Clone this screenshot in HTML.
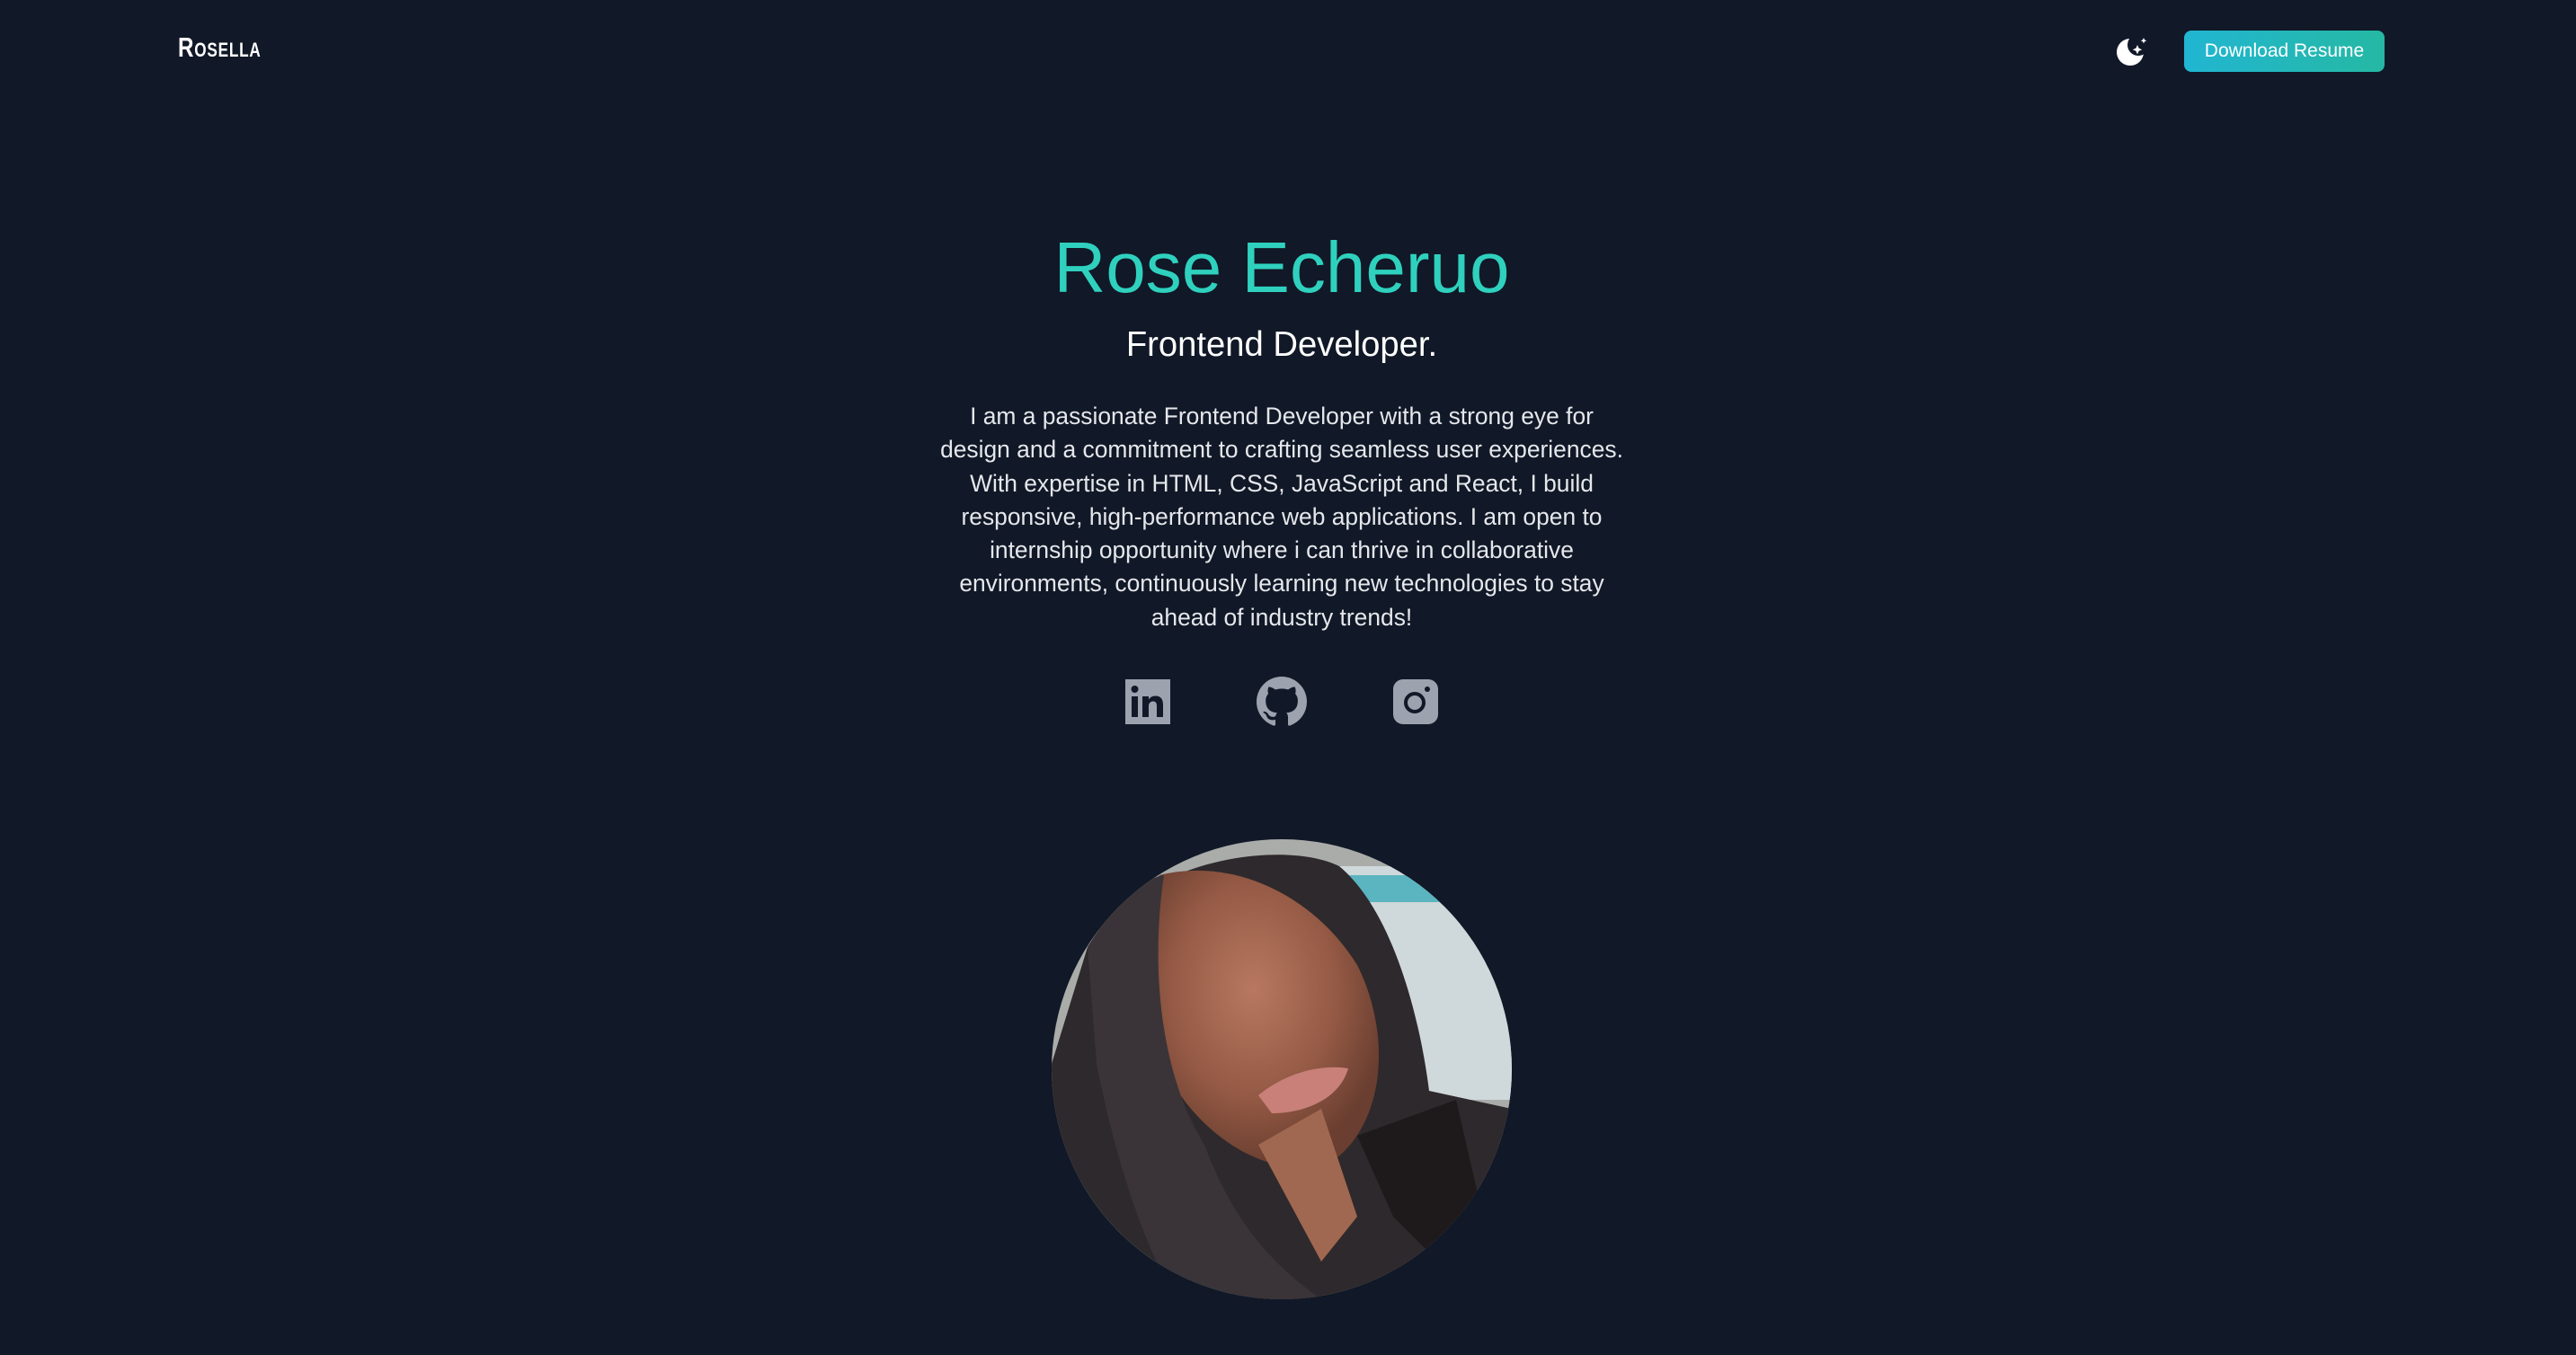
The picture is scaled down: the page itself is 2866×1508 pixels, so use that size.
<!DOCTYPE html>
<html><head><meta charset="utf-8">
<style>
html,body{margin:0;padding:0}
body{width:2866px;height:1508px;background:#111827;position:relative;overflow:hidden;font-family:"Liberation Sans",Arial,sans-serif}
.abs{position:absolute}
.logo{left:198px;top:37px;color:#fff;font-size:31px;font-variant:small-caps;letter-spacing:1px;transform:scaleX(0.78);transform-origin:left top;line-height:1;font-weight:bold}
.btn{left:2430px;top:34px;width:223px;height:46px;border-radius:8px;background:linear-gradient(90deg,#21b6d2,#25b8a3);color:#fff;font-size:21px;line-height:46px;text-align:center}
.name{left:0;width:2852px;top:258px;text-align:center;font-size:80px;line-height:80px;color:#2fd1be}
.sub{left:0;width:2852px;top:364px;text-align:center;font-size:39px;line-height:39px;color:#fff;transform:scaleX(0.98)}
.para{left:0;width:2852px;top:445px;text-align:center;font-size:26.4px;line-height:37.3px;color:#e5e7eb}
</style></head><body>
<div class="abs logo">Rosella</div>
<svg class="abs" style="left:2352px;top:38px" width="40" height="40" viewBox="0 0 40 40">
<defs><mask id="m"><rect width="40" height="40" fill="#fff"/><circle cx="27" cy="12" r="12" fill="#000"/></mask></defs>
<circle cx="18" cy="20" r="15" fill="#fff" mask="url(#m)"/>
<path d="M26 12 l1.6 3.6 3.6 1.6 -3.6 1.6 -1.6 3.6 -1.6 -3.6 -3.6 -1.6 3.6 -1.6z" fill="#fff"/>
<path d="M33 4 l1 2.2 2.2 1 -2.2 1 -1 2.2 -1 -2.2 -2.2 -1 2.2 -1z" fill="#fff"/>
</svg>
<div class="abs btn">Download Resume</div>
<div class="abs name">Rose Echeruo</div>
<div class="abs sub">Frontend Developer.</div>
<div class="abs para">I am a passionate Frontend Developer with a strong eye for<br>design and a commitment to crafting seamless user experiences.<br>With expertise in HTML, CSS, JavaScript and React, I build<br>responsive, high-performance web applications. I am open to<br>internship opportunity where i can thrive in collaborative<br>environments, continuously learning new technologies to stay<br>ahead of industry trends!</div>

<svg class="abs" style="left:1252px;top:756px" width="50" height="50" viewBox="0 0 50 50">
<rect width="50" height="50" fill="#9ca3af"/>
<rect x="7" y="19" width="7" height="23" fill="#111827"/>
<circle cx="10.5" cy="11" r="4" fill="#111827"/>
<path d="M19 19 h7 v3.5 c1.5-2.5 4-4 7.5-4 c6 0 8.5 3.5 8.5 10 v13.5 h-7 v-12 c0-3.5-1-5.5-4-5.5 s-5 2-5 5.5 v12 h-7z" fill="#111827"/>
</svg>
<svg class="abs" style="left:1398px;top:753px" width="56" height="56" viewBox="0 0 16 16">
<path fill="#9ca3af" d="M8 0C3.58 0 0 3.58 0 8c0 3.54 2.290 6.530 5.470 7.590.4.07.55-.17.55-.38 0-.19-.01-.82-.01-1.49-2.01.37-2.53-.49-2.69-.94-.09-.23-.48-.94-.82-1.13-.28-.15-.68-.52-.01-.53.63-.01 1.08.58 1.23.82.72 1.21 1.87.87 2.33.66.07-.52.28-.87.51-1.07-1.78-.2-3.64-.89-3.64-3.95 0-.87.31-1.59.82-2.15-.08-.2-.36-1.02.08-2.12 0 0 .67-.21 2.2.82.64-.18 1.32-.27 2-.27.68 0 1.36.09 2 .27 1.53-1.04 2.2-.82 2.2-.82.44 1.1.16 1.92.08 2.12.51.56.82 1.27.82 2.15 0 3.07-1.87 3.75-3.65 3.95.29.25.54.73.54 1.48 0 1.07-.01 1.93-.01 2.2 0 .21.15.46.55.38A8.013 8.013 0 0016 8c0-4.42-3.58-8-8-8z"/>
</svg>
<svg class="abs" style="left:1550px;top:756px" width="50" height="50" viewBox="0 0 50 50">
<rect width="50" height="50" rx="11" fill="#9ca3af"/>
<circle cx="24" cy="26" r="10" fill="none" stroke="#111827" stroke-width="4"/>
<circle cx="38" cy="11" r="3" fill="#111827"/>
</svg>

<svg class="abs" style="left:1170px;top:934px" width="512" height="512" viewBox="0 0 512 512">
<defs>
<clipPath id="c"><circle cx="256" cy="256" r="256"/></clipPath>
<radialGradient id="face" cx="0.45" cy="0.4" r="0.6"><stop offset="0" stop-color="#b87860"/><stop offset="0.6" stop-color="#955a45"/><stop offset="1" stop-color="#6a3e30"/></radialGradient>
</defs>
<g clip-path="url(#c)">
<rect width="512" height="512" fill="#a9aca9"/>
<rect x="290" y="30" width="222" height="260" fill="#cfd8da"/>
<rect x="310" y="40" width="150" height="30" fill="#5bb5c0"/>
<rect x="0" y="380" width="200" height="140" fill="#8fd0b2"/>
<path d="M40 120 C100 20 260 0 320 30 C380 80 410 200 420 280 L512 300 L512 512 L0 512 L0 250 Z" fill="#2e292c"/>
<path d="M120 40 C200 20 290 60 340 140 C380 220 370 320 310 360 C250 380 180 340 140 280 C110 220 100 120 120 40Z" fill="url(#face)"/>
<path d="M40 120 C70 70 110 40 125 40 C110 140 120 260 170 340 C200 420 240 470 300 512 L140 512 C100 450 70 350 50 250 Z" fill="#3a3438"/>
<path d="M230 285 C260 260 300 250 330 255 C320 290 280 305 245 305 Z" fill="#c88078"/>
<path d="M340 330 L450 290 L480 420 L430 470 L380 420 Z" fill="#1e1a1c"/>
<path d="M230 340 L300 300 L340 420 L300 470 Z" fill="#a06850"/>
</g>
</svg>
</body></html>
